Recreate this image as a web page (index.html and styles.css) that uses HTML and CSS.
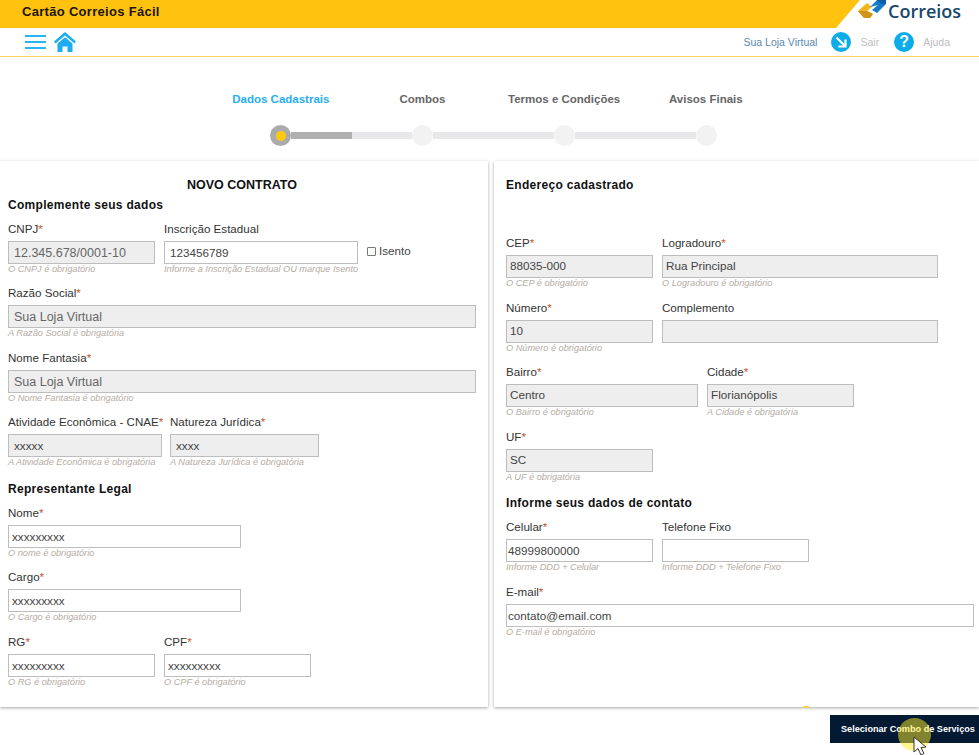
FILE: index.html
```html
<!DOCTYPE html>
<html lang="pt-BR">
<head>
<meta charset="utf-8">
<title>Cartão Correios Fácil</title>
<link rel="stylesheet" href="styles.css">
</head>
<body>
<header class="topbar">
  <div class="topbar-yellow"><span class="app-title">Cartão Correios Fácil</span></div>
  <div class="logo">
    <svg class="logo-mark" viewBox="0 0 28 18" width="28" height="18" aria-hidden="true">
      <path d="M0 11 L9 3 L14 7 L9 11 L15 14 L12 18 L6 18 Z" fill="#f2b51d"/>
      <path d="M0 11 L9 11 L15 14 L12 18 L6 18 Z" fill="#cf9418"/>
      <path d="M12 7 L19 0 L28 0 L28 4 L19 13 L14 10 L20 5 Z" fill="#1479c9"/>
      <path d="M19 0 L28 0 L28 4 L23 4 Z" fill="#0d5ea8"/>
    </svg>
    <span class="logo-text">Correios</span>
  </div>
</header>
<nav class="subbar">
  <div class="subbar-left">
    <span class="burger"><i></i><i></i><i></i></span>
    <svg class="home" viewBox="0 0 22 20" width="22" height="20" aria-hidden="true">
      <path d="M11 0 L22 9.5 L20.5 11.5 L11 3.5 L1.5 11.5 L0 9.5 Z" fill="#1eaef0"/>
      <path d="M3.5 11.5 L11 5.2 L18.5 11.5 V20 H13.5 V14.5 H8.5 V20 H3.5 Z" fill="#1eaef0"/>
    </svg>
  </div>
  <div class="subbar-right">
    <span class="user">Sua Loja Virtual</span>
    <svg class="round-icon" viewBox="0 0 20 20" width="20" height="20" aria-hidden="true">
      <circle cx="10" cy="10" r="10" fill="#0cace8"/>
      <path d="M5.5 5.5 L13.5 13.5 M14.5 7.5 V14.5 H7.5" fill="none" stroke="#fff" stroke-width="2.2"/>
    </svg>
    <span class="muted sair">Sair</span>
    <span class="help">?</span>
    <span class="muted">Ajuda</span>
  </div>
</nav>
<section class="steps">
  <div class="step-labels">
    <span class="step-label active">Dados Cadastrais</span>
    <span class="step-label">Combos</span>
    <span class="step-label">Termos e Condições</span>
    <span class="step-label">Avisos Finais</span>
  </div>
  <div class="step-track">
    <span class="dot current"><i></i></span>
    <span class="link"><i></i></span>
    <span class="dot"></span>
    <span class="link"></span>
    <span class="dot"></span>
    <span class="link"></span>
    <span class="dot"></span>
  </div>
</section>
<main class="panels">
  <form class="panel panel-left">
    <h1 class="contract">NOVO CONTRATO</h1>
    <h2 class="section first">Complemente seus dados</h2>
    <div class="row">
      <div class="field w147"><label>CNPJ<b>*</b></label><input class="off big" readonly value="12.345.678/0001-10"><small>O CNPJ é obrigatório</small></div>
      <div class="field w194"><label>Inscrição Estadual</label><input class="pad5" value="123456789"><small>Informe a Inscrição Estadual OU marque Isento</small></div>
      <label class="isento"><input type="checkbox">Isento</label>
    </div>
    <div class="field w468"><label>Razão Social<b>*</b></label><input class="off big" readonly value="Sua Loja Virtual"><small>A Razão Social é obrigatória</small></div>
    <div class="field w468"><label>Nome Fantasia<b>*</b></label><input class="off big" readonly value="Sua Loja Virtual"><small>O Nome Fantasia é obrigatório</small></div>
    <div class="row tight">
      <div class="field w154"><label>Atividade Econômica - CNAE<b>*</b></label><input class="off pad5" readonly value="xxxxx"><small>A Atividade Econômica é obrigatória</small></div>
      <div class="field w149"><label>Natureza Jurídica<b>*</b></label><input class="off pad5" readonly value="xxxx"><small>A Natureza Jurídica é obrigatória</small></div>
    </div>
    <h2 class="section rep">Representante Legal</h2>
    <div class="field w233"><label>Nome<b>*</b></label><input value="xxxxxxxxx"><small>O nome é obrigatório</small></div>
    <div class="field w233"><label>Cargo<b>*</b></label><input value="xxxxxxxxx"><small>O Cargo é obrigatório</small></div>
    <div class="row">
      <div class="field w147"><label>RG<b>*</b></label><input value="xxxxxxxxx"><small>O RG é obrigatório</small></div>
      <div class="field w147"><label>CPF<b>*</b></label><input value="xxxxxxxxx"><small>O CPF é obrigatório</small></div>
    </div>
  </form>
  <form class="panel panel-right">
    <h2 class="section address">Endereço cadastrado</h2>
    <div class="row">
      <div class="field w147"><label>CEP<b>*</b></label><input class="off raise" readonly value="88035-000"><small>O CEP é obrigatório</small></div>
      <div class="field w276"><label>Logradouro<b>*</b></label><input class="off raise" readonly value="Rua Principal"><small>O Logradouro é obrigatório</small></div>
    </div>
    <div class="row">
      <div class="field w147"><label>Número<b>*</b></label><input class="off raise" readonly value="10"><small>O Número é obrigatório</small></div>
      <div class="field w276"><label>Complemento</label><input class="off raise" readonly></div>
    </div>
    <div class="row">
      <div class="field w192"><label>Bairro<b>*</b></label><input class="off raise" readonly value="Centro"><small>O Bairro é obrigatório</small></div>
      <div class="field w147"><label>Cidade<b>*</b></label><input class="off raise" readonly value="Florianópolis"><small>A Cidade é obrigatória</small></div>
    </div>
    <div class="field w147"><label>UF<b>*</b></label><input class="off raise" readonly value="SC"><small>A UF é obrigatória</small></div>
    <h2 class="section contact">Informe seus dados de contato</h2>
    <div class="row">
      <div class="field w147"><label>Celular<b>*</b></label><input class="pad1" value="48999800000"><small>Informe DDD + Celular</small></div>
      <div class="field w147"><label>Telefone Fixo</label><input class="pad1"><small>Informe DDD + Telefone Fixo</small></div>
    </div>
    <div class="field w468"><label>E-mail<b>*</b></label><input class="pad1" value="contato@email.com"><small>O E-mail é obrigatório</small></div>
  </form>
</main>
<footer class="actions">
  <button class="next" type="button">Selecionar Combo de Serviços</button>
</footer>
<span class="speck"></span>
<span class="click-halo"></span>
<svg class="pointer" viewBox="0 0 18 22" width="18" height="22" aria-hidden="true">
  <path d="M1 1 L1 16 L5 12.5 L8 19 L11 17.5 L8 11.5 L13 11 Z" fill="#fff" stroke="#333" stroke-width="1"/>
</svg>
</body>
</html>
```

FILE: styles.css
```css
* { box-sizing: border-box; }
html, body { margin: 0; padding: 0; }
body {
  width: 979px;
  height: 755px;
  overflow: hidden;
  position: relative;
  background: #fff;
  font-family: "Liberation Sans", Arial, sans-serif;
  color: #222;
}

/* top bar */
.topbar { height: 28px; position: relative; background: #fff; }
.topbar-yellow {
  height: 28px;
  background: #ffc20e;
  clip-path: polygon(0 0, 860px 0, 836px 28px, 0 28px);
  padding-left: 22px;
  line-height: 21px;
}
.app-title { font-size: 13px; font-weight: 700; color: #1c1407; letter-spacing: .3px; }
.logo { position: absolute; left: 858px; top: 0; display: flex; align-items: center; gap: 2px; height: 22px; }
.logo-mark { flex: none; align-self: flex-start; }
.logo-text { display: block; font-family: "Open Sans", sans-serif; font-size: 18px; font-weight: 600; color: #18476b; line-height: 22px; }

/* sub bar */
.subbar {
  height: 29px;
  border-bottom: 1px solid #ffd65c;
  display: flex;
  justify-content: space-between;
  align-items: center;
  padding: 0 29px 1px 25px;
}
.subbar-left { display: flex; align-items: center; gap: 8px; }
.burger { display: flex; flex-direction: column; gap: 4px; width: 21px; }
.burger i { display: block; height: 2px; background: #29b5f5; }
.subbar-right { display: flex; align-items: center; font-size: 10.5px; }
.user { color: #5c88b0; margin-right: 14px; }
.muted { color: #bdbdbd; }
.sair { margin-left: 9px; margin-right: 15px; }
.help {
  width: 20px; height: 20px; border-radius: 50%;
  background: #0cace8; color: #fff;
  font-size: 16px; font-weight: 700; line-height: 20px; text-align: center;
  margin-right: 9px;
}

/* stepper */
.steps { height: 104px; padding-top: 35px; }
.step-labels {
  display: grid;
  grid-template-columns: repeat(4, 141.67px);
  margin-left: 210px;
  font-size: 11.5px;
  font-weight: 700;
  line-height: 14px;
  text-align: center;
  color: #666;
}
.step-label.active { color: #29aef0; }
.step-track { display: flex; align-items: center; margin: 19px 0 0 270px; }
.dot { flex: none; width: 21px; height: 21px; border-radius: 50%; background: #f2f2f2; display: flex; align-items: center; justify-content: center; }
.dot.current { background: #ababab; }
.dot.current i { width: 10px; height: 10px; border-radius: 50%; background: #ffc90d; }
.link { flex: none; width: 121px; height: 7px; background: #e8e8ea; }
.link i { display: block; width: 61px; height: 7px; background: #b0b0b0; }

/* panels */
.panels { display: flex; gap: 6px; height: 546px; }
.panel { background: #fff; box-shadow: 0 1px 3px rgba(0, 0, 0, .35); }
.panel-left { width: 488px; padding: 16px 12px 0 8px; }
.panel-right { width: 485px; padding: 16px 0 0 12px; }
.contract { margin: 0 0 4px; font-size: 12.5px; line-height: 16px; font-weight: 700; color: #111; text-align: center; }
.section { margin: 0; font-size: 12px; font-weight: 700; line-height: 16px; color: #111; letter-spacing: .3px; }
.section.first { margin-bottom: 8px; }
.section.rep { margin: 3px 0 8px; }
.section.address { margin-bottom: 42px; }
.section.contact { margin: 2px 0 8px; }

.row { display: flex; gap: 9px; align-items: flex-start; }
.row.tight { gap: 8px; }
.field { height: 64.5px; flex: none; }
.panel-left .field { height: 64.25px; }
.field label { display: block; height: 16px; font-size: 11.6px; line-height: 16px; color: #333; margin-bottom: 4px; white-space: nowrap; }
.field label b { color: #c4552b; font-weight: 400; }
.field input {
  display: block;
  width: 100%;
  height: 23px;
  margin: 0;
  padding: 0 3px 0;
  border: 1px solid #bdbdbd;
  outline: 0;
  border-radius: 0;
  background: #fff;
  font: 11.7px "Liberation Sans", Arial, sans-serif;
  color: #444;
}
.field input.off { background: #eee; }
.field input.big { font-size: 12.5px; padding-left: 5px; padding-top: 1px; color: #666; }
.field input.pad5 { padding-left: 5px; }
.field input.pad1 { padding-left: 1px; }
.field input.raise { padding-bottom: 2px; }
.field small { display: block; font-size: 9.2px; line-height: 11px; font-style: italic; color: #b5aca5; white-space: nowrap; }
.w147 { width: 147px; }
.w149 { width: 149px; }
.w154 { width: 154px; }
.w192 { width: 192px; }
.w194 { width: 194px; }
.w233 { width: 233px; }
.w276 { width: 276px; }
.w468 { width: 468px; }
.isento { display: flex; align-items: center; gap: 3px; margin-top: 22px; font-size: 11.6px; color: #444; line-height: 16px; }
.isento input { width: 9px; height: 9px; margin: 0; appearance: none; border: 1px solid #777; border-radius: 1px; background: #fff; }

/* footer */
.actions { display: flex; justify-content: flex-end; margin-top: 8px; }
.next {
  width: 149px;
  height: 28px;
  padding: 0 0 0 11px;
  border: 0;
  background: #041a33;
  color: #fff;
  font: 700 9.15px "Liberation Sans", Arial, sans-serif;
  text-align: left;
  white-space: nowrap;
}
.speck { position: absolute; left: 803px; top: 706px; width: 6px; height: 2px; border-radius: 2px; background: #ffd23c; }
.click-halo {
  position: absolute;
  left: 898px;
  top: 718px;
  width: 33px;
  height: 33px;
  border-radius: 50%;
  background: rgba(255, 235, 40, .5);
}
.pointer { position: absolute; left: 913px; top: 736px; }
```
